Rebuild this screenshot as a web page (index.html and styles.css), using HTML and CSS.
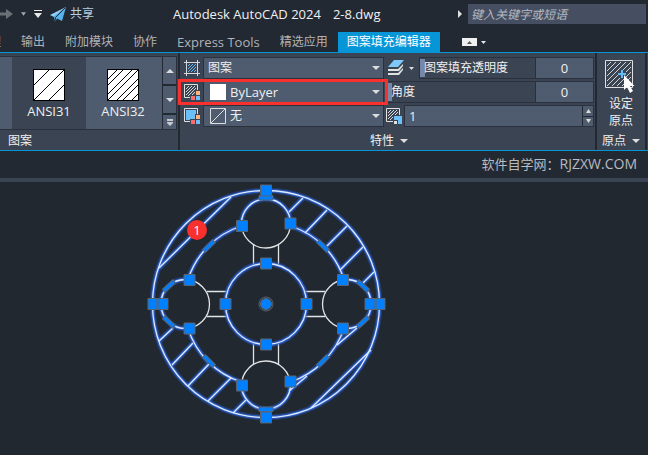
FILE: index.html
```html
<!DOCTYPE html>
<html lang="zh-CN">
<head>
    <meta charset="UTF-8">
    <meta name="viewport" content="width=device-width, initial-scale=1.0">
    <title>Autodesk AutoCAD 2024 - 2-8.dwg</title>
    <link rel="stylesheet" href="styles.css">
</head>

<body>
    <header class="titlebar">
        <div class="quick-access">
            <svg class="redo" width="13" height="12" viewBox="0 0 13 12"><path d="M0 4.500H6V1L13 6L6 11V7.500H0Z" fill="#6b7077"/></svg>
            <svg width="5" height="4" viewBox="0 0 6 4"><path d="M0 0H6L3 4Z" fill="#a5a9ae"/></svg>
            <svg width="8" height="8" viewBox="0 0 8 8"><path d="M0 0H8V1H0ZM0 3H8L4 8Z" fill="#e8e8e8"/></svg>
            <button class="share">
                <svg width="16" height="15" viewBox="0 0 16 15"><path d="M16 0L0 8L4 10Z" fill="#8fd0fa"/><path d="M16 0L4 10L5 15L7 11.500L12 14Z" fill="#55b4f0"/><path d="M15 1L5.500 10.500L5 15" fill="none" stroke="#222933"/></svg>
                共享
            </button>
        </div>
        <div class="title"><span>Autodesk AutoCAD 2024</span><span>2-8.dwg</span></div>
        <svg class="search-arrow" width="4" height="8" viewBox="0 0 4 8"><path d="M0 0L4 4L0 8Z" fill="#e0e0e0"/></svg>
        <input class="search" type="text" placeholder="键入关键字或短语" aria-label="搜索">
    </header>

    <nav class="tabs">
        <a href="#" class="tab tab-cut">理</a>
        <a href="#" class="tab">输出</a>
        <a href="#" class="tab">附加模块</a>
        <a href="#" class="tab">协作</a>
        <a href="#" class="tab latin">Express Tools</a>
        <a href="#" class="tab">精选应用</a>
        <a href="#" class="tab tab-active">图案填充编辑器</a>
        <button class="minimize" aria-label="最小化功能区">
            <svg width="24" height="8" viewBox="0 0 24 8"><path d="M0 0H15V8H0Z" fill="#f0f0f0"/><path d="M5 6H10L7.500 3Z" fill="#555"/><path d="M19 3H24L21.500 6Z" fill="#e8e8e8"/></svg>
        </button>
    </nav>

    <section class="ribbon">
        <div class="panel panel-pattern">
            <div class="gallery">
                <button class="tile tile-selected">
                    <svg class="crisp" width="32" height="32" viewBox="0 0 32 32"><path d="M.5 .5H31.500V31.500H.5Z" fill="#fff" stroke="#000"/><path d="M1 16L16 1M1 31L31 1M16 31L31 16" stroke="#000"/></svg>
                    ANSI31
                </button>
                <button class="tile">
                    <svg class="crisp" width="32" height="32" viewBox="0 0 32 32"><path d="M.5 .5H31.500V31.500H.5Z" fill="#fff" stroke="#000"/><path d="M1 10L10 1M1 16L16 1M1 25L25 1M1 31L31 1M10 31L31 10M16 31L31 16M25 31L31 25" stroke="#000"/></svg>
                    ANSI32
                </button>
                <div class="scroller">
                    <button aria-label="上"><svg width="8" height="4" viewBox="0 0 8 4"><path d="M0 4H8L4 0Z" fill="#ddd"/></svg></button>
                    <button aria-label="下"><svg width="8" height="4" viewBox="0 0 8 4"><path d="M0 0H8L4 4Z" fill="#ddd"/></svg></button>
                    <button class="more" aria-label="更多"><svg width="6" height="7" viewBox="0 0 6 7"><path d="M0 0H6V2H0ZM0 3H6V4L3 7L0 4Z" fill="#c8cacd"/></svg></button>
                </div>
            </div>
            <div class="panel-title">图案</div>
        </div>

        <div class="panel panel-properties">
            <div class="properties">
                <div class="column">
                    <div class="row">
                        <svg class="icon" width="17" height="17" viewBox="0 0 17 17"><path d="M2.500 0V16M13.500 0V16M0 2.500H16M0 13.500H16" stroke="#d5d8dc" fill="none"/><path d="M4 6L6 4M4 9L9 4M4 12L12 4M7 12L12 7M10 12L12 10" stroke="#62b9f5"/></svg>
                        <div class="combo">
                            <select aria-label="图案填充类型"><option>图案</option></select>
                            <svg width="8" height="4" viewBox="0 0 8 4"><path d="M0 0H8L4 4Z" fill="#ddd"/></svg>
                        </div>
                    </div>
                    <div class="row">
                        <svg class="icon" width="17" height="17" viewBox="0 0 17 17"><path d="M.5 .5H13.500V13.500H.5Z" fill="#3b4453" stroke="#e0e0e0"/><path d="M2 5L5 2M2 8L8 2M2 11L11 2M4 12L12 4M7 12L12 7" stroke="#d5d8dc"/><path d="M11 6H17V17H6V11H11Z" fill="#3b4453"/><path d="M12 7H16V11H12Z" fill="#ffb27a"/><path d="M7 12H11V16H7Z" fill="#ff6b6b"/><path d="M12 12H16V16H12Z" fill="#6cc0fa"/></svg>
                        <div class="combo">
                            <svg width="16" height="16" viewBox="0 0 16 16"><path d="M0 0H16V16H0Z" fill="#fff"/></svg>
                            <select class="latin" aria-label="图案填充颜色"><option>ByLayer</option></select>
                            <svg width="8" height="4" viewBox="0 0 8 4"><path d="M0 0H8L4 4Z" fill="#ddd"/></svg>
                        </div>
                        <div class="highlight"></div>
                    </div>
                    <div class="row">
                        <svg class="icon" width="17" height="17" viewBox="0 0 17 17"><path d="M.5 .5H13.500V13.500H.5Z" fill="#3b4453" stroke="#e0e0e0"/><path d="M2 2H12V12H2Z" fill="#6cc0fa"/><path d="M11 6H17V17H6V11H11Z" fill="#3b4453"/><path d="M12 7H16V11H12Z" fill="#ffb27a"/><path d="M7 12H11V16H7Z" fill="#ff6b6b"/><path d="M12 12H16V16H12Z" fill="#6cc0fa"/></svg>
                        <div class="combo">
                            <svg width="16" height="16" viewBox="0 0 16 16"><path d="M.5 .5H15.500V15.500H.5ZM1 15L15 1" fill="none" stroke="#ddd"/></svg>
                            <select aria-label="背景色"><option>无</option></select>
                            <svg width="8" height="4" viewBox="0 0 8 4"><path d="M0 0H8L4 4Z" fill="#ddd"/></svg>
                        </div>
                    </div>
                </div>

                <div class="column">
                    <div class="row">
                        <button class="layers" aria-label="透明度">
                            <svg width="26" height="16" viewBox="0 0 26 16"><path d="M6 0H16L10 7H0Z" fill="#7fc8fa"/><path d="M0 9H10L15 4V6L11 11H0ZM0 13H10L15 8V10L11 15H0Z" fill="#e0e2e0"/><path d="M21 7H26L23.500 10Z" fill="#ddd"/></svg>
                        </button>
                        <div class="slider">
                            <label for="opacity">图案填充透明度</label>
                            <input type="range" id="opacity" min="0" max="90" value="0">
                        </div>
                        <input class="number latin" type="text" value="0" aria-label="透明度值">
                    </div>
                    <div class="row">
                        <div class="slider">
                            <label for="angle">角度</label>
                            <input type="range" id="angle" min="0" max="359" value="0">
                        </div>
                        <input class="number latin" type="text" value="0" aria-label="角度值">
                    </div>
                    <div class="row">
                        <svg class="icon" width="16" height="16" viewBox="0 0 16 16"><path d="M7 13.500H.5V.5H13.500V7" fill="none" stroke="#e0e0e0"/><path d="M2 5L5 2M2 8L8 2M2 11L11 2M4 12L12 4" stroke="#d5d8dc"/><path d="M7 7H16V16H7Z" fill="#3b4453"/><path d="M8 8H16V16H12V12H8Z" fill="#6cc0fa"/><path d="M8 13H11V16H8Z" fill="#e0e0e0"/></svg>
                        <div class="spinner">
                            <input class="latin" type="text" value="1" aria-label="填充图案比例">
                            <div class="spin-buttons">
                                <button aria-label="增加"><svg width="5" height="4" viewBox="0 0 5 4"><path d="M0 4H5L2.500 0Z" fill="#ddd"/></svg></button>
                                <button aria-label="减少"><svg width="5" height="4" viewBox="0 0 5 4"><path d="M0 0H5L2.500 4Z" fill="#ddd"/></svg></button>
                            </div>
                        </div>
                    </div>
                </div>
            </div>
            <div class="panel-title panel-title-center">特性 <svg width="8" height="4" viewBox="0 0 8 4"><path d="M0 0H8L4 4Z" fill="#ddd"/></svg></div>
        </div>

        <div class="panel panel-origin">
            <button class="set-origin">
                <svg width="32" height="33" viewBox="0 0 32 33"><path d="M.5 .5H27.500V27.500H.5Z" fill="none" stroke="#e0e0e0"/><path d="M2 6L6 2M2 11L11 2M2 16L16 2M2 21L21 2M2 26L26 2M7 26L26 7M12 26L26 12M17 26L26 17" stroke="#d0d3d6"/><path d="M13 14H21M17 10V18" stroke="#3b4453" stroke-width="5"/><path d="M13 14H21M17 10V18" stroke="#62b9f5" stroke-width="2"/><path d="M19 15V30L22 27L25 33L28 31L25 26H29.500Z" fill="#fff"/></svg>
                <span>设定<br>原点</span>
            </button>
            <div class="panel-title panel-title-center">原点 <svg width="8" height="4" viewBox="0 0 8 4"><path d="M0 0H8L4 4Z" fill="#ddd"/></svg></div>
        </div>
    </section>

    <div class="watermark">软件自学网：<span class="site">RJZXW.COM</span></div>

    <main class="canvas">
        <!-- Чертёж: фланец со штриховкой, начало координат в центре фланца -->
        <svg class="drawing" width="240" height="240" viewBox="-120 -120 240 240">
            <defs>
                <g id="outline">
                    <circle r="113.500"/>
                    <circle r="40.500"/>
                    <path d="M-24.370 -78A24.500 24.500 0 1 1 24.370 -78A82 82 0 0 1 78 -24.370A24.500 24.500 0 1 1 78 24.370A86 86 0 0 1 24.370 78A24.500 24.500 0 1 1 -24.370 78A82 82 0 0 1 -78 24.370A24.500 24.500 0 1 1 -78 -24.370A82 82 0 0 1 -24.370 -78Z"/>
                    <path d="M-107 -36L-35 -107M23 -92L37 -106M39 -71L61 -94M61 -58L81 -78M74 -34L97 -57M97 -21L108 -32"/>
                    <path d="M-107 37L-93 24M-94 61L-73 39M-78 82L-57 60M-58 97L-35 74M-33 109L-20 96"/>
                    <path d="M45 104L105 46M23 87L41 72M71 41L91 24"/>
                </g>
            </defs>
            <g class="thin">
                <circle cy="-80.500" r="24.500"/>
                <circle cy="81.500" r="24.500"/>
                <circle cx="-81" r="24.500"/>
                <circle cx="81" r="24.500"/>
                <path d="M-12.500 -60V-39M12.500 -60V-39M-12.500 60V39M12.500 60V39M-59 -12.500H-39M-59 12.500H-39M59 -12.500H39M59 12.500H39"/>
            </g>
            <use href="#outline" class="glow-wide"/>
            <use href="#outline" class="glow"/>
            <use href="#outline" class="core"/>
            <g class="grip">
                <path d="M-7 -108.500H7V-104H-7ZM-7 103H7V107.500H-7Z"/>
                <path d="M-7 -2H7V2H-7Z" transform="translate(-57 -58) rotate(-45)"/>
                <path d="M-7 -2H7V2H-7Z" transform="translate(57 -58) rotate(45)"/>
                <path d="M-7 -2H7V2H-7Z" transform="translate(-57 57) rotate(45)"/>
                <path d="M-7 -2H7V2H-7Z" transform="translate(57 57) rotate(-45)"/>
                <path d="M-7 -2H7V2H-7Z" transform="translate(-97 -18) rotate(-42)"/>
                <path d="M-7 -2H7V2H-7Z" transform="translate(97 -18) rotate(42)"/>
                <path d="M-7 -2H7V2H-7Z" transform="translate(-97 18) rotate(42)"/>
                <path d="M-7 -2H7V2H-7Z" transform="translate(97 18) rotate(-42)"/>
                <path d="M-5.500 -119H5.500V-108H-5.500ZM-5.500 108H5.500V119H-5.500ZM-118 -5.500H-107V5.500H-118ZM-109 -5.500H-98V5.500H-109ZM99 -5.500H110V5.500H99ZM108 -5.500H119V5.500H108Z"/>
                <path d="M-29.500 -83.500H-18.500V-72.500H-29.500ZM19 -86H30V-75H19ZM-82 -29.500H-71V-18.500H-82ZM71.500 -29.500H82.500V-18.500H71.500Z"/>
                <path d="M-82 19H-71V30H-82ZM71.500 19H82.500V30H71.500ZM-29.500 76H-18.500V87H-29.500ZM19 72H30V83H19Z"/>
                <path d="M-46 -5.500H-35V5.500H-46ZM35 -5.500H46V5.500H35ZM-5.500 -46H5.500V-35H-5.500ZM-5.500 35H5.500V46H-5.500Z"/>
                <circle r="7" class="ring"/>
                <circle r="5.500"/>
            </g>
        </svg>
        <span class="badge">1</span>
    </main>
</body>
</html>
```
FILE: styles.css
```css
* {
    box-sizing: border-box;
}

body {
    background-color: #212830;
    color: #f0f0f0;
    font-family: 'Open Sans', 'Noto Sans CJK SC', sans-serif;
    font-size: 12px;
    line-height: 16px;
    margin: 0;
    min-height: 100vh;
    display: flex;
    flex-direction: column;
    overflow: hidden;
}

button, input, select {
    font: inherit;
    color: inherit;
    background: none;
    border: 0;
    border-radius: 0;
    margin: 0;
    padding: 0;
    min-width: 0;
    outline: none;
}

svg {
    flex: none;
    display: block;
}

/* Латиница чуть крупнее иероглифов */
.latin {
    font-size: 13px;
}

.crisp {
    shape-rendering: crispEdges;
}

.titlebar {
    background-color: #222933;
    height: 32px;
    display: flex;
    align-items: center;
    padding: 0 2px 4px 0;
}

.quick-access {
    display: flex;
    align-items: center;
    gap: 8px;
    width: 173px;
}

.share {
    display: flex;
    align-items: center;
    gap: 4px;
    color: #b5cfe4;
}

.title {
    flex: 1;
    display: flex;
    gap: 12px;
    font-size: 13px;
    white-space: nowrap;
}

.search-arrow {
    margin-right: 6px;
}

.search {
    width: 178px;
    height: 20px;
    padding: 0 3px;
    background-color: #464f61;
}

.search::placeholder {
    color: #b5bac3;
    font-style: italic;
    opacity: 1;
}

.tabs {
    background-color: #222933;
    border-bottom: 1px solid #0696d7;
    height: 21px;
    display: flex;
    align-items: stretch;
    white-space: nowrap;
}

.tab {
    color: #b0b3b8;
    text-decoration: none;
    line-height: 20px;
    padding: 0 10px;
}

.tab-cut {
    width: 11px;
    padding: 0;
    direction: rtl;
    overflow: hidden;
    border-right: 10px solid #222933;
}

.tab-active {
    background-color: #0696d7;
    color: #fff;
    padding: 0 9px;
}

.minimize {
    margin-left: 22px;
}

.ribbon {
    background-color: #3b4453;
    border-bottom: 1px solid #0696d7;
    height: 98px;
    display: flex;
}

.panel {
    display: flex;
    flex-direction: column;
    justify-content: space-between;
    border-right: 2px solid #222933;
}

.panel-title {
    padding: 0 8px;
    line-height: 18px;
}

.panel-title-center {
    display: flex;
    align-items: center;
    justify-content: center;
    gap: 6px;
    padding: 0;
}

/* Галерея образцов */
.panel-pattern {
    width: 180px;
    padding-top: 3px;
}

.gallery {
    display: flex;
    width: 177px;
    height: 74px;
    background-color: #4f5b6e;
    border: 1px solid #2a313c;
    border-left: 0;
    padding-left: 12px;
}

.tile {
    flex: 1;
    display: flex;
    flex-direction: column;
    align-items: center;
    gap: 2px;
    padding-top: 12px;
    font-size: 13px;
}

.tile-selected {
    background-color: #3b4453;
}

.scroller {
    width: 14px;
    margin-left: 2px;
    display: flex;
    flex-direction: column;
    gap: 2px;
    background-color: #222933;
    padding-left: 1px;
}

.scroller button {
    flex: 2;
    display: flex;
    align-items: center;
    justify-content: center;
    background-color: #4f5b6e;
}

.scroller .more {
    flex: 1;
}

/* Свойства */
.panel-properties {
    flex: 1;
    padding: 4px 1px 0 4px;
}

.properties {
    display: grid;
    grid-template-columns: 200px 1fr;
    gap: 2px;
}

.column {
    display: flex;
    flex-direction: column;
    gap: 2px;
    min-width: 0;
}

.row {
    display: flex;
    align-items: center;
    height: 22px;
    gap: 2px;
    position: relative;
}

.combo {
    flex: 1;
    display: flex;
    align-items: center;
    gap: 4px;
    height: 22px;
    padding: 0 3px 0 4px;
    background-color: #4f5b6e;
    border: 1px solid #2a313c;
}

.combo > svg:first-child {
    margin-left: 2px;
}

.combo select {
    flex: 1;
    appearance: none;
}

/* Красная рамка поверх строки цвета */
.highlight {
    position: absolute;
    inset: -2px -4px -2px -6px;
    border: 3px solid #f8312f;
    z-index: 1;
    pointer-events: none;
}

.layers {
    width: 31px;
    padding-left: 2px;
}

.slider {
    flex: 1;
    display: grid;
    height: 22px;
    border: 1px solid #2a313c;
}

.slider label,
.slider input {
    grid-area: 1 / 1;
}

.slider label {
    line-height: 20px;
    padding-left: 4px;
    z-index: 1;
    pointer-events: none;
}

.slider input {
    appearance: none;
    width: 100%;
    height: 20px;
}

.slider input::-webkit-slider-thumb {
    appearance: none;
    width: 5px;
    height: 18px;
    background-color: #7688a8;
}

.number {
    width: 59px;
    height: 22px;
    margin-left: -3px;
    text-align: center;
    background-color: #4f5b6e;
    border: 1px solid #2a313c;
}

.spinner {
    flex: 1;
    min-width: 0;
    display: flex;
    height: 22px;
    background-color: #4f5b6e;
    border: 1px solid #2a313c;
}

.spinner input {
    flex: 1;
    padding: 0 4px;
}

.spin-buttons {
    width: 11px;
    display: flex;
    flex-direction: column;
    gap: 1px;
    background-color: #222933;
    padding-left: 1px;
}

.spin-buttons button {
    flex: 1;
    display: flex;
    align-items: center;
    justify-content: center;
    background-color: #4f5b6e;
}

.panel-origin {
    width: 50px;
    padding-top: 7px;
    margin-right: 1px;
}

.set-origin {
    display: flex;
    flex-direction: column;
    align-items: center;
    gap: 2px;
    line-height: 17px;
}

.watermark {
    background-color: #222933;
    border-bottom: 4px solid #3b4453;
    height: 31px;
    padding: 4px 11px 0 0;
    font-size: 13px;
    line-height: 18px;
    color: #b9bcc0;
    text-align: right;
}

.site {
    font-size: 14px;
}

/* Чертёж */
.canvas {
    flex: 1;
    position: relative;
}

.drawing {
    position: absolute;
    left: 146px;
    top: 2px;
}

.thin,
.glow-wide,
.glow,
.core {
    fill: none;
}

.thin {
    stroke: #e2e4e6;
    stroke-width: 1.3;
}

.glow-wide {
    stroke: #2158c8;
    stroke-opacity: 0.35;
    stroke-width: 6;
}

.glow {
    stroke: #2f6be8;
    stroke-opacity: 0.7;
    stroke-width: 3.5;
}

.core {
    stroke: #e0eaff;
    stroke-width: 1.3;
}

.grip {
    fill: #007fff;
    stroke: #5a6470;
}

.ring {
    fill: #212830;
}

.badge {
    position: absolute;
    left: 187px;
    top: 38px;
    width: 20px;
    height: 20px;
    border-radius: 50%;
    background-color: #f8312f;
    color: #fff;
    font-size: 13px;
    line-height: 20px;
    text-align: center;
}
```
